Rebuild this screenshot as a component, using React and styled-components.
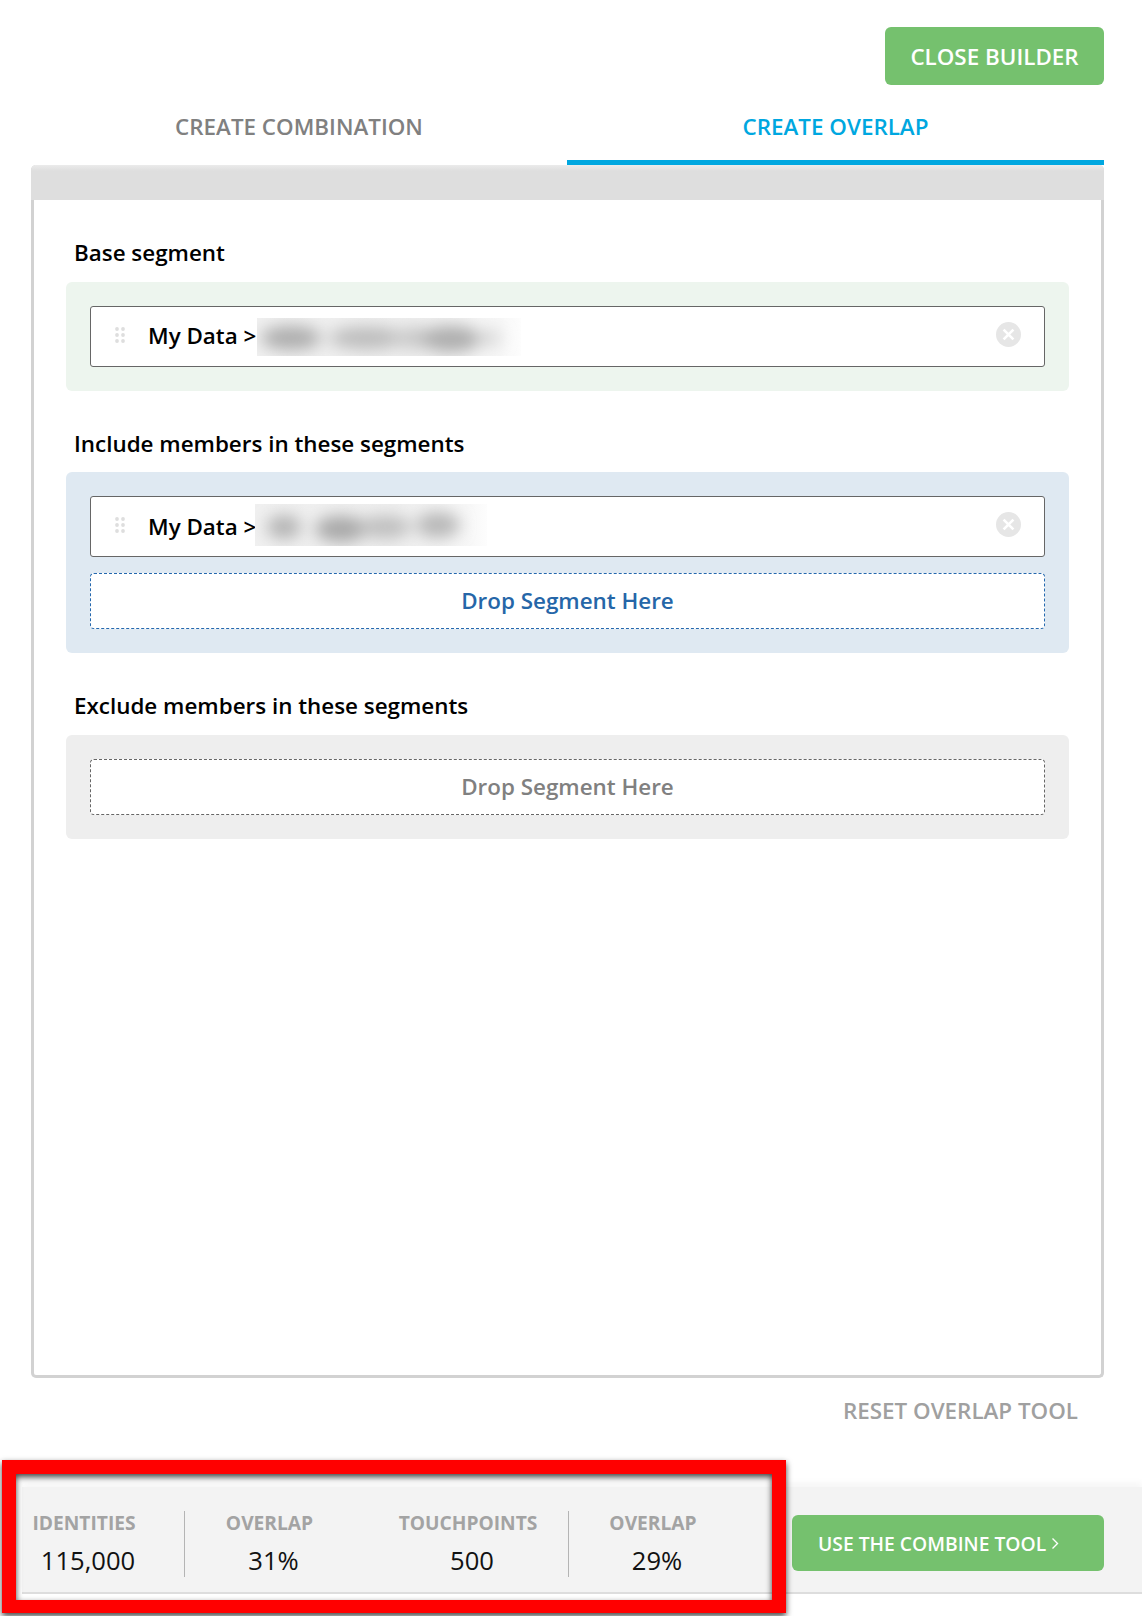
import React from "react";
import styled, { createGlobalStyle } from "styled-components";

const Global = createGlobalStyle`
  html, body { margin: 0; padding: 0; background: #fff; }
  body { font-family: "Open Sans", "Liberation Sans", sans-serif; }
  * { box-sizing: border-box; }
`;

const Page = styled.div`
  position: relative;
  width: 1142px;
  height: 1616px;
  overflow: hidden;
  background: #fff;
`;

const TopBar = styled.div`
  display: flex;
  justify-content: flex-end;
  padding: 27px 38px 0 0;
`;

const GreenButton = styled.button`
  display: flex;
  align-items: center;
  justify-content: ${(p) => (p.$wide ? "flex-start" : "center")};
  gap: 5px;
  width: ${(p) => (p.$wide ? "312px" : "219px")};
  height: ${(p) => (p.$wide ? "56px" : "58px")};
  margin-top: ${(p) => (p.$wide ? "-2px" : "0")};
  padding: ${(p) => (p.$wide ? "0 0 0 26px" : "0")};
  border: 0;
  border-radius: 6px;
  background: #75c16e;
  color: #fff;
  font-family: inherit;
  font-weight: 600;
  font-size: ${(p) => (p.$wide ? "19.3px" : "22.4px")};
`;

const Tabs = styled.div`
  display: grid;
  grid-template-columns: 536px 537px;
  margin: 0 38px 0 31px;
  height: 80px;
`;

const Tab = styled.div`
  display: flex;
  justify-content: center;
  padding-top: 27px;
  font-size: 22.4px;
  line-height: 30px;
  font-weight: 600;
  color: ${(p) => (p.$active ? "#00a7e0" : "#808080")};
  border-bottom: 5px solid ${(p) => (p.$active ? "#00a7e0" : "transparent")};
`;

const Panel = styled.div`
  margin: 0 38px 0 31px;
  height: 1213px;
  border: 3px solid #d2d2d2;
  border-top: 0;
  border-radius: 5px;
`;

const PanelHeader = styled.div`
  height: 35px;
  margin: 0 -3px;
  border-radius: 5px 5px 0 0;
  background: linear-gradient(#ebebeb 0, #dedede 6px);
`;

const PanelBody = styled.div`
  padding: 39px 32px 0;
`;

const Section = styled.section`
  margin-top: ${(p) => p.$top || 0}px;
`;

const SectionLabel = styled.h3`
  margin: 0 0 ${(p) => p.$gap}px 8px;
  font-size: 22.4px;
  line-height: 27px;
  font-weight: 600;
  color: #000;
`;

const Well = styled.div`
  display: flex;
  flex-direction: column;
  gap: 16px;
  padding: 24px 24px;
  border-radius: 6px;
  background: ${(p) => p.$bg};
`;

const SegmentRow = styled.div`
  display: flex;
  align-items: center;
  height: 61px;
  padding: 0 23px 0 24px;
  background: #fff;
  border: 1.4px solid #666;
  border-radius: 3px;
`;

const Grip = styled.svg`
  flex: none;
  width: 10px;
  height: 16px;
  margin: -3px 23px 0 0;
  fill: #dedede;
`;

const SegmentText = styled.span`
  flex: none;
  margin-top: ${(p) => p.$dy}px;
  font-size: 22.4px;
  line-height: 30px;
  font-weight: 600;
  color: #000;
`;

const Blurred = styled.svg`
  flex: none;
  display: block;
  margin-left: ${(p) => p.$ml}px;
  margin-top: ${(p) => p.$mt}px;
`;

const CloseIcon = styled.svg`
  flex: none;
  width: 25px;
  height: 25px;
  margin-left: auto;
  margin-top: -4px;
`;

const DropZone = styled.div`
  display: flex;
  align-items: center;
  justify-content: center;
  height: 56px;
  padding-bottom: 2px;
  background: #fff;
  border: 1px dashed ${(p) => p.$line};
  border-radius: 4px;
  font-size: 22.4px;
  font-weight: 600;
  color: ${(p) => p.$color};
`;

const ResetRow = styled.div`
  display: flex;
  justify-content: flex-end;
  padding: 18px 64px 0 0;
  font-size: 22.4px;
  line-height: 30px;
  font-weight: 600;
  color: #a0a0a0;
`;

const BottomBar = styled.div`
  display: flex;
  align-items: center;
  margin: 61px 0 0 22px;
  height: 107px;
  padding-top: 9px;
  background: #f3f3f3;
  border-bottom: 2px solid #dddddd;
  box-shadow: 0 -5px 6px rgba(0, 0, 0, 0.035);
`;

const Stats = styled.div`
  display: flex;
  width: 770px;
  height: 66px;
`;

const Stat = styled.div`
  width: ${(p) => p.$w}px;
  padding-top: 1px;
  padding-right: ${(p) => p.$pr}px;
  border-right: ${(p) => (p.$rule ? "1px solid #b4b4b4" : "0")};
  text-align: center;
`;

const StatLabel = styled.div`
  font-size: 19.2px;
  line-height: 22px;
  font-weight: 700;
  color: #a3a3a3;
`;

const StatValue = styled.div`
  margin-top: 11px;
  padding-left: 8px;
  font-size: 25.6px;
  line-height: 32px;
  color: #111;
`;

const Annotation = styled.div`
  position: absolute;
  left: 2px;
  top: 1460px;
  width: 784px;
  height: 153px;
  border: solid #ff0000;
  border-width: 14px 14px 13px;
  filter: drop-shadow(0 3px 3px rgba(0, 0, 0, 0.75));
  pointer-events: none;
`;

const GripIcon = () => (
  <Grip viewBox="0 0 10 16">
    {[0, 6, 12].map((y) => (
      <g key={y}>
        <circle cx="2" cy={y + 2} r="1.9" />
        <circle cx="8" cy={y + 2} r="1.9" />
      </g>
    ))}
  </Grip>
);

const Close = () => (
  <CloseIcon viewBox="0 0 25 25">
    <circle cx="12.5" cy="12.5" r="12.5" fill="#e6e6e6" />
    <path d="M7.6 7.6l9.8 9.8M17.4 7.6l-9.8 9.8" stroke="#fff" strokeWidth="2.6" />
  </CloseIcon>
);

const BlurPatch = ({ id, w, h, ml, mt, blobs }) => (
  <Blurred $ml={ml} $mt={mt} width={w} height={h} viewBox={`0 0 ${w} ${h}`}>
    <defs>
      <linearGradient id={`${id}g`} x1="0" x2="1" y1="0" y2="0">
        <stop offset="0" stopColor="#f0f0f0" />
        <stop offset="0.6" stopColor="#eeeeee" />
        <stop offset="0.92" stopColor="#f7f7f7" />
        <stop offset="1" stopColor="#fdfdfd" />
      </linearGradient>
      <filter id={`${id}f`} x="-30%" y="-100%" width="160%" height="300%">
        <feGaussianBlur stdDeviation="8" />
      </filter>
      <clipPath id={`${id}c`}>
        <rect width={w} height={h} />
      </clipPath>
    </defs>
    <rect width={w} height={h} fill={`url(#${id}g)`} />
    <g clipPath={`url(#${id}c)`}>
      <g filter={`url(#${id}f)`}>
        {blobs.map(([cx, cy, rx, ry, c], i) => (
          <ellipse key={i} cx={cx} cy={cy} rx={rx} ry={ry} fill={c} />
        ))}
      </g>
    </g>
  </Blurred>
);

const blobsA = [
  [34, 20, 30, 12, "#adadad"],
  [110, 20, 38, 11, "#bcbcbc"],
  [158, 20, 24, 10, "#c8c8c8"],
  [194, 21, 30, 13, "#adadad"],
  [232, 20, 12, 8, "#d6d6d6"],
];

const blobsB = [
  [29, 23, 17, 12, "#b4b4b4"],
  [86, 25, 26, 13, "#a8a8a8"],
  [130, 23, 26, 11, "#bebebe"],
  [183, 21, 22, 13, "#b8b8b8"],
];

export default function App() {
  return (
    <Page>
      <Global />
      <TopBar>
        <GreenButton>CLOSE BUILDER</GreenButton>
      </TopBar>
      <Tabs>
        <Tab>CREATE COMBINATION</Tab>
        <Tab $active>CREATE OVERLAP</Tab>
      </Tabs>
      <Panel>
        <PanelHeader />
        <PanelBody>
          <Section>
            <SectionLabel $gap={16}>Base segment</SectionLabel>
            <Well $bg="#edf5ee">
              <SegmentRow>
                <GripIcon />
                <SegmentText $dy={-1}>My Data &gt;</SegmentText>
                <BlurPatch id="a" w={264} h={38} ml={1} mt={1} blobs={blobsA} />
                <Close />
              </SegmentRow>
            </Well>
          </Section>
          <Section $top={39}>
            <SectionLabel $gap={15}>Include members in these segments</SectionLabel>
            <Well $bg="#dfe9f2">
              <SegmentRow>
                <GripIcon />
                <SegmentText $dy={1}>My Data &gt;</SegmentText>
                <BlurPatch id="b" w={232} h={42} ml={-1} mt={-3} blobs={blobsB} />
                <Close />
              </SegmentRow>
              <DropZone $line="#2468ae" $color="#2566a8">Drop Segment Here</DropZone>
            </Well>
          </Section>
          <Section $top={39}>
            <SectionLabel $gap={16}>Exclude members in these segments</SectionLabel>
            <Well $bg="#eeeeee">
              <DropZone $line="#666666" $color="#808080">Drop Segment Here</DropZone>
            </Well>
          </Section>
        </PanelBody>
      </Panel>
      <ResetRow>RESET OVERLAP TOOL</ResetRow>
      <BottomBar>
        <Stats>
          <Stat $w={163} $pr={38} $rule>
            <StatLabel>IDENTITIES</StatLabel>
            <StatValue>115,000</StatValue>
          </Stat>
          <Stat $w={183} $pr={14}>
            <StatLabel>OVERLAP</StatLabel>
            <StatValue>31%</StatValue>
          </Stat>
          <Stat $w={201} $pr={0} $rule>
            <StatLabel>TOUCHPOINTS</StatLabel>
            <StatValue>500</StatValue>
          </Stat>
          <Stat $w={203} $pr={35}>
            <StatLabel>OVERLAP</StatLabel>
            <StatValue>29%</StatValue>
          </Stat>
        </Stats>
        <GreenButton $wide>
          USE THE COMBINE TOOL
          <svg width="8" height="13" viewBox="0 0 8 13" fill="none">
            <path d="M1.5 1.5l5 5-5 5" stroke="#fff" strokeWidth="1.4" />
          </svg>
        </GreenButton>
      </BottomBar>
      <Annotation />
    </Page>
  );
}
